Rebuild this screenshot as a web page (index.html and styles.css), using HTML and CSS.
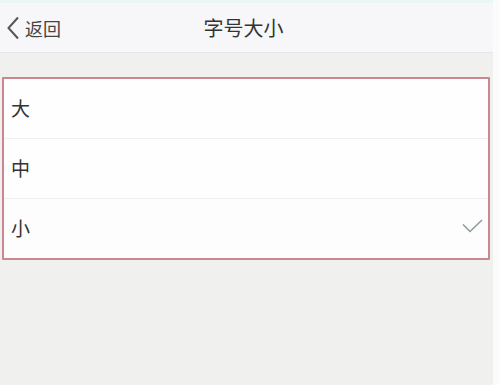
FILE: index.html
```html
<!DOCTYPE html>
<html lang="zh-CN">
<head>
<meta charset="utf-8">
<title>字号大小</title>
<link rel="stylesheet" href="styles.css">
</head>
<body>
<div class="page">
  <div class="screen">
    <div class="topstrip"></div>
    <header class="nav">
      <a class="back">
        <svg class="chev" width="14" height="24" viewBox="0 0 14 24"><path d="M12 1.5 L2.5 12 L12 22.5" fill="none" stroke="#555" stroke-width="2"/></svg>
        <span class="back-text">返回</span>
      </a>
      <h1 class="title">字号大小</h1>
    </header>
    <div class="list">
      <div class="row"><span class="label">大</span></div>
      <div class="row"><span class="label">中</span></div>
      <div class="row"><span class="label">小</span>
        <svg class="check" width="21" height="15" viewBox="0 0 21 15"><path d="M1 5.5 L8 12.5 L20 1" fill="none" stroke="#8c9b97" stroke-width="1.5"/></svg>
      </div>
    </div>
  </div>
  <div class="edge"></div>
</div>
</body>
</html>
```
FILE: styles.css
```css
html, body {
  margin: 0;
  padding: 0;
}
body {
  width: 499px;
  height: 385px;
  overflow: hidden;
  font-family: "Noto Sans CJK SC", "Noto Sans", sans-serif;
  color: #333;
  background: #f0f0ef;
}
.page {
  display: flex;
  height: 385px;
}
.screen {
  width: 493px;
  background: #f0f0ef;
  display: flex;
  flex-direction: column;
}
.edge {
  flex: 1;
  background: #fbfbfb;
}
.topstrip {
  height: 3px;
  background: #e9f7f7;
}
.nav {
  height: 49px;
  background: #f7f7f9;
  border-bottom: 1px solid #e6e6e8;
  display: flex;
  align-items: center;
  position: relative;
}
.back {
  display: flex;
  align-items: center;
  padding-left: 6px;
  color: #444;
}
.chev {
  display: block;
  margin-top: 1px;
}
.back-text {
  font-size: 18px;
  margin-left: 5px;
  line-height: 1;
  color: #444;
}
.title {
  position: absolute;
  left: 0;
  right: 0;
  text-align: center;
  margin: 0;
  font-size: 20px;
  font-weight: 400;
  color: #333;
  line-height: 49px;
  transform: translateX(-3px);
}
.list {
  margin: 24px 3px 0 2px;
  border: 2px solid #c98890;
  border-radius: 1px;
  background: #fff;
}
.row {
  height: 59px;
  display: flex;
  align-items: center;
  justify-content: space-between;
  padding: 0 5px 0 7px;
  border-bottom: 1px solid #f1eff1;
  background: #fefefe;
}
.row:last-child {
  border-bottom: none;
  background: #fcfdfc;
}
.label {
  font-size: 19px;
  line-height: 1;
  color: #333;
  margin-top: -3px;
}
.check {
  display: block;
  margin-top: -4px;
}
```
